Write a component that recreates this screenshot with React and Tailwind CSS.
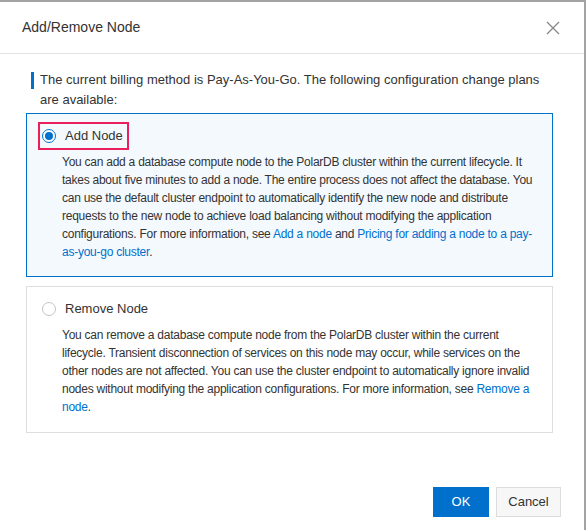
import React, { useState } from "react";

// -----------------------------------------------------------------------------
// Radio dot
// -----------------------------------------------------------------------------
function Radio({ checked }) {
  return (
    <span
      className={`flex h-[14px] w-[14px] shrink-0 items-center justify-center rounded-full border bg-white ${
        checked ? "border-[#0070cc]" : "border-[#c4c4c4]"
      }`}
    >
      {checked && <span className="h-[8px] w-[8px] rounded-full bg-[#0070cc]" />}
    </span>
  );
}

function Link({ children }) {
  return <a className="text-[#0070cc] cursor-pointer">{children}</a>;
}

// -----------------------------------------------------------------------------
// Plan card
// -----------------------------------------------------------------------------
function PlanCard({ label, selected, highlight, onSelect, children }) {
  return (
    <div
      onClick={onSelect}
      className={`border pl-[11px] pr-[4px] pt-[8px] ${
        selected ? "border-[#0070cc] bg-[#f4f9fe] pb-[15px]" : "border-[#dedede] bg-white pb-[16px]"
      }`}
    >
      <div
        className={`inline-flex h-[28px] items-center gap-[9px] border-2 pl-[2px] pr-[4px] ${
          highlight ? "border-[#ea1f5d]" : "border-transparent"
        }`}
      >
        <Radio checked={selected} />
        <span className="text-[13px] text-[#333]">{label}</span>
      </div>
      <p className="mt-[3px] pl-[24px] text-[12px] leading-[18px] tracking-[-0.25px] text-[#333]">
        {children}
      </p>
    </div>
  );
}

export default function App() {
  const [plan, setPlan] = useState("add");

  return (
    <div className="h-[530px] w-[586px] bg-[#a3a3a3] pt-[2px] font-['Liberation_Sans',Arial,sans-serif]">
      <div className="flex h-[528px] w-[584px] flex-col bg-white">
        {/* header */}
        <div className="flex h-[52px] shrink-0 items-center justify-between border-b border-[#e3e3e3] pl-[22px] pr-[23px]">
          <span className="text-[14px] text-[#333]">Add/Remove Node</span>
          <svg width="16" height="16" viewBox="0 0 16 16" className="text-[#8a8a8a]">
            <path d="M2 2L14 14M14 2L2 14" stroke="currentColor" strokeWidth="1.4" />
          </svg>
        </div>

        {/* body */}
        <div className="pl-[26px] pr-[31px] pt-[16px]">
          <div className="flex gap-[6px]">
            <span className="ml-[5px] mt-[2px] h-[17px] w-[3px] shrink-0 bg-[#0070cc]" />
            <p className="-mr-[20px] text-[13px] leading-[20px] text-[#333]">
              The current billing method is Pay-As-You-Go. The following configuration change plans
              <br />
              are available:
            </p>
          </div>

          <div className="mt-[3px] flex flex-col gap-[9px]">
            <PlanCard
              label="Add Node"
              selected={plan === "add"}
              highlight
              onSelect={() => setPlan("add")}
            >
              You can add a database compute node to the PolarDB cluster within the current lifecycle. It
              <br />
              takes about five minutes to add a node. The entire process does not affect the database. You
              <br />
              can use the default cluster endpoint to automatically identify the new node and distribute
              <br />
              requests to the new node to achieve load balancing without modifying the application
              <br />
              configurations. For more information, see <Link>Add a node</Link> and{" "}
              <Link>Pricing for adding a node to a pay-</Link>
              <br />
              <Link>as-you-go cluster</Link>.
            </PlanCard>

            <PlanCard
              label="Remove Node"
              selected={plan === "remove"}
              onSelect={() => setPlan("remove")}
            >
              You can remove a database compute node from the PolarDB cluster within the current
              <br />
              lifecycle. Transient disconnection of services on this node may occur, while services on the
              <br />
              other nodes are not affected. You can use the cluster endpoint to automatically ignore invalid
              <br />
              nodes without modifying the application configurations. For more information, see{" "}
              <Link>Remove a</Link>
              <br />
              <Link>node</Link>.
            </PlanCard>
          </div>
        </div>

        {/* footer */}
        <div className="mt-auto flex justify-end gap-[7px] pb-[13px] pr-[23px]">
          <button className="h-[30px] w-[56px] bg-[#0070cc] text-[13px] text-white">OK</button>
          <button className="h-[30px] w-[65px] border border-[#dcdcdc] bg-[#f7f7f7] text-[13px] text-[#333]">
            Cancel
          </button>
        </div>
      </div>
    </div>
  );
}
